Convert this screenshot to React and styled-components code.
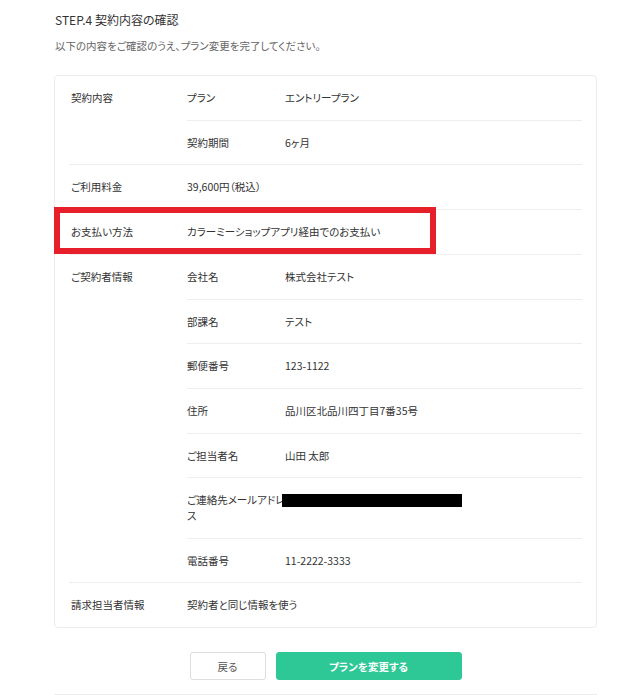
import React from "react";
import styled, { createGlobalStyle } from "styled-components";

const Global = createGlobalStyle`
  html, body { margin: 0; padding: 0; background: #fff; }
  body {
    font-family: "Noto Sans CJK JP", "Noto Sans", sans-serif;
    color: #333;
    font-feature-settings: "palt";
  }
`;

const Page = styled.div`
  padding: 12px 21px 0 54px;
`;

const Title = styled.h2`
  margin: 0 0 0 1px;
  font-size: 12px;
  line-height: 16px;
  font-weight: 400;
  color: #333;
`;

const Lead = styled.p`
  margin: 10px 0 0 1px;
  font-size: 10.5px;
  line-height: 16px;
  color: #666;
`;

const Card = styled.div`
  margin-top: 21px;
  border: 1px solid #ececec;
  border-radius: 4px;
  padding: 0 14px;
`;

const Group = styled.div`
  position: relative;
  display: flex;
  & + & { border-top: 1px solid #eeeeee; }
`;

const cell = `
  font-size: 10.5px;
  line-height: 15.7px;
  padding: 14px 0;
`;

const GroupLabel = styled.div`
  ${cell}
  width: 116px;
  flex: none;
  padding-left: 2px;
`;

const SubList = styled.div`
  flex: 1;
  display: flex;
  flex-direction: column;
`;

const SubRow = styled.div`
  position: relative;
  display: flex;
  & + & { border-top: 1px solid #eeeeee; }
`;

const SubLabel = styled.div`
  ${cell}
  width: 98px;
  flex: none;
  word-break: break-all;
`;

const Value = styled.div`
  ${cell}
  flex: 1;
`;

const Highlight = styled.div`
  position: absolute;
  left: -15px;
  top: -3px;
  width: 382px;
  height: 47px;
  box-sizing: border-box;
  border: 6px solid #e61f2a;
  pointer-events: none;
`;

const Redacted = styled.div`
  position: absolute;
  left: 95px;
  top: 16px;
  width: 180px;
  height: 13px;
  background: #000;
`;

const Actions = styled.div`
  display: flex;
  justify-content: center;
  gap: 10px;
  margin-top: 24px;
`;

const Button = styled.button`
  height: 28px;
  width: ${(p) => p.$w}px;
  border-radius: 3px;
  font-family: inherit;
  font-feature-settings: "palt";
  font-size: 10.5px;
  font-weight: ${(p) => (p.$primary ? 700 : 400)};
  color: ${(p) => (p.$primary ? "#fff" : "#555")};
  background: ${(p) => (p.$primary ? "#2ec796" : "#fff")};
  border: 1px solid ${(p) => (p.$primary ? "#2ec796" : "#dedede")};
  cursor: pointer;
`;

const Footer = styled.div`
  margin-top: 14px;
  border-top: 1px solid #ececec;
  height: 2px;
`;

const groups = [
  { label: "契約内容", rows: [["プラン", "エントリープラン"], ["契約期間", "6ヶ月"]] },
  { label: "ご利用料金", value: "39,600円（税込）" },
  { label: "お支払い方法", value: "カラーミーショップアプリ経由でのお支払い", highlight: true },
  {
    label: "ご契約者情報",
    rows: [
      ["会社名", "株式会社テスト"],
      ["部課名", "テスト"],
      ["郵便番号", "123-1122"],
      ["住所", "品川区北品川四丁目7番35号"],
      ["ご担当者名", "山田 太郎"],
      ["ご連絡先メールアドレス", "", true],
      ["電話番号", "11-2222-3333"],
    ],
  },
  { label: "請求担当者情報", value: "契約者と同じ情報を使う" },
];

export default function App() {
  return (
    <>
      <Global />
      <Page>
        <Title>STEP.4 契約内容の確認</Title>
        <Lead>以下の内容をご確認のうえ、プラン変更を完了してください。</Lead>
        <Card>
          {groups.map((g) => (
            <Group key={g.label}>
              <GroupLabel>{g.label}</GroupLabel>
              <SubList>
                {g.rows ? (
                  g.rows.map(([k, v, redacted]) => (
                    <SubRow key={k}>
                      <SubLabel>{k}</SubLabel>
                      <Value>{v}</Value>
                      {redacted && <Redacted />}
                    </SubRow>
                  ))
                ) : (
                  <SubRow>
                    <Value>{g.value}</Value>
                  </SubRow>
                )}
              </SubList>
              {g.highlight && <Highlight />}
            </Group>
          ))}
        </Card>
        <Actions>
          <Button $w={76}>戻る</Button>
          <Button $w={186} $primary>プランを変更する</Button>
        </Actions>
        <Footer />
      </Page>
    </>
  );
}
